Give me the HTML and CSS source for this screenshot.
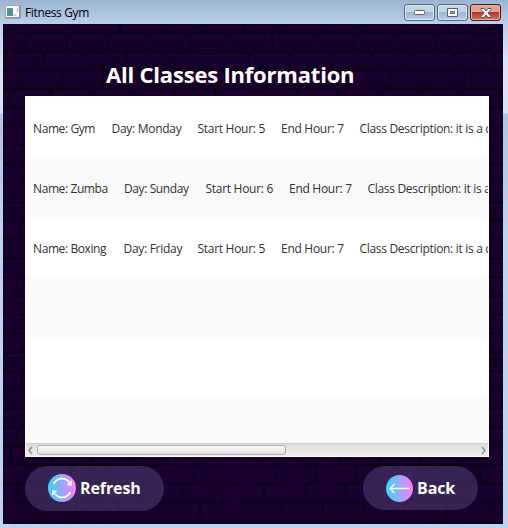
FILE: index.html
```html
<!DOCTYPE html>
<html lang="en">
<head>
<meta charset="utf-8">
<title>Fitness Gym</title>
<link rel="stylesheet" href="styles.css">
</head>
<body>
<div class="window">
  <header class="titlebar">
    <svg class="app-icon" width="16" height="14" viewBox="0 0 16 14"><rect x=".5" y=".5" width="14" height="12" fill="#fafafa" stroke="#a5a5a5"/><path d="M15 .5v12.500H.5" fill="none" stroke="#777"/><rect x="2" y="3" width="6" height="8" fill="#5f8fb0"/><path d="M2 10V7l5-3v6z" fill="#4f9878"/><path d="M8.500 10h3M12.500 3v4" stroke="#bbc3cd" stroke-width="1.500"/></svg>
    <span class="app-title">Fitness Gym</span>
    <div class="controls">
      <span class="control"><svg width="11" height="5"><rect x=".5" y=".5" width="10" height="4" rx="1" fill="#fff" stroke="#596170"/></svg></span>
      <span class="control"><svg width="11" height="9"><path fill-rule="evenodd" d="M.5.5h10v8H.5zM3.500 3.500v2h4v-2z" fill="#fff" stroke="#596170"/></svg></span>
      <span class="control close"><svg width="12" height="10" viewBox="0 0 12 10"><path d="M1 .5h3L6 3 8 .500h3v1L8 5l3 3.500v1H8L6 7 4 9.500H1v-1L4 5 1 1.500z" fill="#fff" stroke="#5c5265"/></svg></span>
    </div>
  </header>
  <main class="stage">
    <svg class="bricks" id="bricks" width="500" height="500"></svg>
    <h1>All Classes Information</h1>
    <section class="list">
      <div class="row"><span class="w62 tight">Name: Gym</span><span class="w70">Day: Monday</span><span class="w67">Start Hour: 5</span><span class="w62">End Hour: 7</span><span class="desc">Class Description: it is a c</span></div>
      <div class="row"><span class="w75 tight">Name: Zumba</span><span class="w65 tight">Day: Sunday</span><span class="w67">Start Hour: 6</span><span class="w62">End Hour: 7</span><span class="desc">Class Description: it is a c</span></div>
      <div class="row"><span class="w74 tight">Name: Boxing</span><span class="w58">Day: Friday</span><span class="w67">Start Hour: 5</span><span class="w62">End Hour: 7</span><span class="desc">Class Description: it is a c</span></div>
      <div class="row"></div>
      <div class="row"></div>
      <div class="row last"></div>
      <div class="scrollbar">
        <svg width="11" height="12"><path d="M6 3 3 6.500 6 10" fill="none" stroke="#888" stroke-width="1.300"/></svg>
        <div class="track"><div class="thumb"></div></div>
        <svg width="11" height="12"><path d="M5 3 8 6.500 5 10" fill="none" stroke="#888" stroke-width="1.300"/></svg>
      </div>
    </section>
    <footer>
      <button class="pill refresh"><svg width="28" height="28" viewBox="0 0 28 28"><defs><linearGradient id="g"><stop offset="0" stop-color="#35d4ff"/><stop offset="1" stop-color="#ff7cf6"/></linearGradient></defs><circle cx="14" cy="14" r="14" fill="url(#g)"/><path d="M5.500 10C9 3.500 17 3 21 8M22.500 18C19 24.500 11 25 7 20" fill="none" stroke="#fff" stroke-width="1.700"/><path d="M23.500 7v4.500l-4-1zM4.500 21v-4.500l4 1z" fill="#fff" stroke="#fff"/></svg><span>Refresh</span></button>
      <button class="pill back"><svg width="27" height="27" viewBox="0 0 27 27"><circle cx="13.500" cy="13.500" r="13.500" fill="url(#g)"/><path d="M24 13.500H4M8.500 9 4 13.500 8.500 18" fill="none" stroke="#fff" stroke-width="1.300"/></svg><span>Back</span></button>
    </footer>
  </main>
</div>
<script src="bricks.js"></script>
</body>
</html>
```
FILE: styles.css
```css
* { box-sizing: border-box; }
body { margin: 0; overflow: hidden; font-family: "Open Sans", "Noto Sans", sans-serif; }
.window { width: 508px; height: 528px; padding: 0 5px 4px 3px; background: linear-gradient(#9bb5d1 0, #b9d1ea 24px, #d5e3f3 60px, #d5e3f3 113px, #aec6df 114px, #bcd3ed 240px, #bcd3ed); }
.titlebar { height: 24px; display: flex; align-items: flex-start; padding-left: 2px; }
.app-icon { margin-top: 5px; }
.app-title { margin: 4px 0 0 4px; font-size: 12px; line-height: 18px; letter-spacing: -.37px; color: #000; }
.controls { margin-left: auto; display: flex; gap: 2px; padding: 4px 2px 0 0; }
.control { width: 31px; height: 17px; display: flex; align-items: center; justify-content: center; border: 1px solid #53677f; border-radius: 3px; background: linear-gradient(#c4d5e8 0 48%, #9bb4d0 50%, #b8d0e9); box-shadow: inset 0 0 0 1px #d9e7f5; }
.control svg { position: relative; top: 0; }
.control.close { border-color: #4c1722; background: linear-gradient(#e5a092 0 44%, #b8341f 48%, #d3705d); box-shadow: inset 0 0 0 1px #e9afa4; }
.stage { position: relative; height: 500px; padding: 0 14px 0 22px; background: #08000f; overflow: hidden; }
.bricks { position: absolute; inset: 0; }
h1 { position: relative; margin: 0; height: 72px; padding: 35px 0 0 81px; color: #fff; font-size: 22px; line-height: 30px; font-weight: 700; letter-spacing: -.2px; white-space: nowrap; }
.list { position: relative; height: 361px; background: #fff; padding: 1px; overflow: hidden; }
.row { height: 60px; display: flex; align-items: center; gap: 16px; padding: 2px 0 0 7px; font-size: 12px; letter-spacing: -.29px; color: #323232; white-space: nowrap; overflow: hidden; }
.row span { flex: none; }
.row .tight { letter-spacing: -.4px; }
.row .desc { letter-spacing: -.31px; }
.row:nth-child(even) { background: #f9f9f9; }
.row.last { height: 46px; }
.w58 { width: 58px; } .w62 { width: 62.500px; } .w65 { width: 65.500px; } .w67 { width: 67.500px; } .w70 { width: 70px; } .w74 { width: 74.500px; } .w75 { width: 75px; }
.scrollbar { height: 13px; display: flex; background: linear-gradient(#dcdcdc, #eee); border-top: 1px solid #cfcfcf; }
.track { flex: 1; padding-top: 1px; }
.thumb { width: 249px; height: 10px; border: 1px solid #b0b0b0; border-radius: 3px; background: linear-gradient(#fafafa, #dedede); }
footer { position: relative; display: flex; justify-content: space-between; padding: 9px 11px 0 0; }
.pill { height: 45px; border: 0; border-radius: 23px; background: rgba(88, 70, 125, .5); display: flex; align-items: center; padding: 0 0 0 23px; gap: 4px; color: #fff; font: 700 16px/22px "Open Sans", sans-serif; letter-spacing: -.1px; }
.pill span { padding-bottom: 2px; }
.pill svg { flex: none; margin-bottom: 1px; }
.refresh { width: 139px; }
.back { width: 115px; height: 44px; }
.back svg { margin: 1px 0 0; }
.back span { padding-bottom: 0; }
```
FILE: bricks.js
```javascript
const wall = document.getElementById("bricks");
const offsets = [38, 26, 3, 21, 10, 28, 17, 35];
const bottomOffsets = { 23: 11, 24: 29, 25: 18, 26: 36 };
const rowHeight = 18.8;
const brickWidth = 41;
let out = '<defs><linearGradient id="b" x1="0" y1="0" x2="0" y2="1"><stop offset="0" stop-color="#1b002d"/><stop offset=".5" stop-color="#18002c"/><stop offset="1" stop-color="#140025"/></linearGradient><radialGradient id="glow"><stop offset="0" stop-color="#2c0058" stop-opacity=".3"/><stop offset="1" stop-color="#2c0058" stop-opacity="0"/></radialGradient></defs>';
for (let r = 0; r < 28; r++) {
  const y = -9.8 + r * rowHeight;
  const offset = bottomOffsets[r] ?? offsets[r % 8];
  for (let x = offset - 44; x < 500; x += brickWidth) {
    out += `<rect x="${x + 0.8}" y="${y + 0.8}" width="${brickWidth - 1.6}" height="${rowHeight - 1.6}" rx="2" fill="url(#b)" stroke="#110020"/>`;
  }
}
out += '<rect width="500" height="560" fill="url(#glow)"/>';
wall.innerHTML = out;
```
